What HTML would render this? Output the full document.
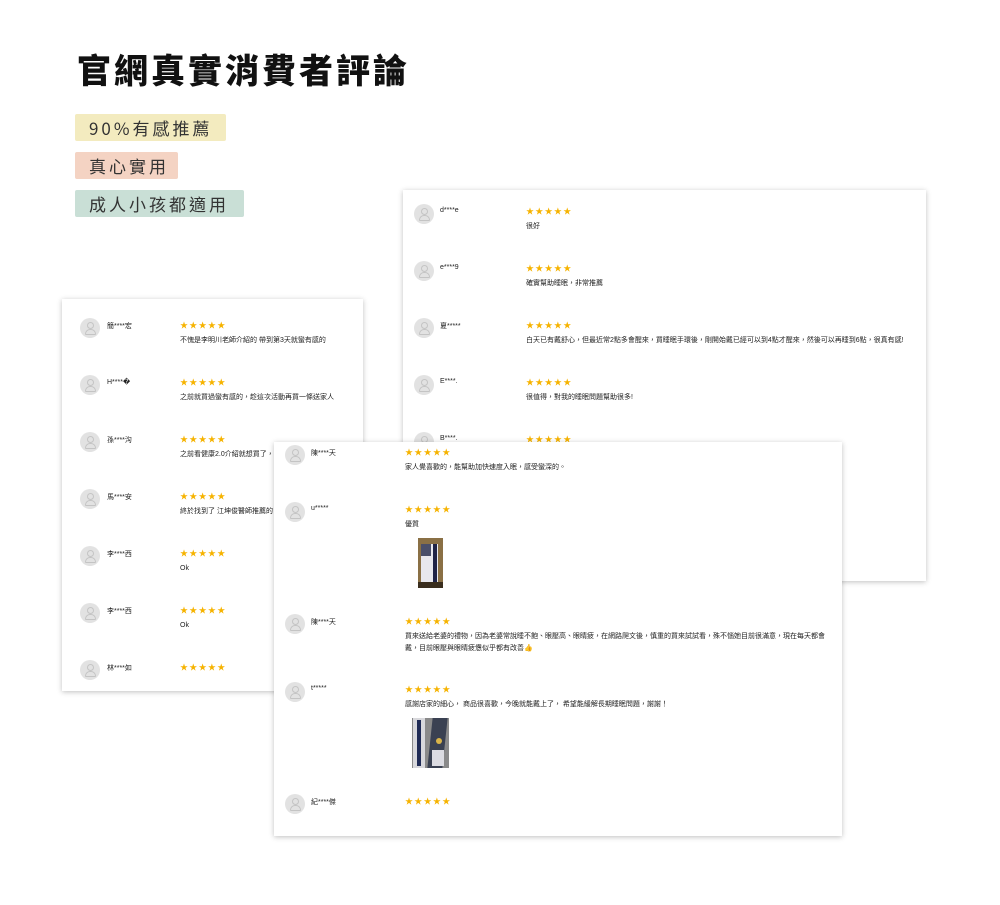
<!DOCTYPE html>
<html><head><meta charset="utf-8">
<style>
*{margin:0;padding:0;box-sizing:border-box}
body{width:1000px;height:905px;background:#fff;position:relative;overflow:hidden;font-family:"Liberation Sans","Noto Sans CJK TC",sans-serif;color:#333}
h1{position:absolute;left:77px;top:44px;font-size:34px;font-weight:900;letter-spacing:3px;color:#111;font-family:"Noto Sans CJK TC",sans-serif}
.tag{position:absolute;left:75px;height:27px;line-height:27px;font-size:17px;letter-spacing:3px;padding-left:14px;color:#333;border-radius:2px;font-family:"Noto Sans CJK TC",sans-serif}
.card{position:absolute;background:#fff;box-shadow:0 1px 5px rgba(0,0,0,.25);overflow:hidden}
.r{position:absolute;left:0;right:0;height:14px}
.av{position:absolute;width:20px;height:20px;border-radius:50%;background:#e2e2e2;top:-4px}
.av:before{content:"";position:absolute;left:7px;top:4px;width:5px;height:5px;border:1px solid #c4c4c4;border-radius:50%}
.av:after{content:"";position:absolute;left:5px;top:11px;width:9px;height:4px;border:1px solid #c4c4c4;border-radius:5px 5px 1px 1px}
.nm{position:absolute;top:-1px;font-size:7px;color:#222;white-space:nowrap}
.st{position:absolute;top:0;font-size:8px;color:#f6b300;letter-spacing:1.3px;white-space:nowrap;line-height:8px}
.tx{position:absolute;top:13px;font-size:7px;color:#222;white-space:nowrap;line-height:12px}
.img{position:absolute;overflow:hidden}
</style></head><body>
<h1>官網真實消費者評論</h1>
<div class="tag" style="top:114px;width:151px;background:#f3ebbf">90%有感推薦</div>
<div class="tag" style="top:152px;width:103px;background:#f4d3c3">真心實用</div>
<div class="tag" style="top:190px;width:169px;background:#c9dfd6">成人小孩都適用</div>

<div class="card" style="left:62px;top:299px;width:301px;height:392px">
<div class="r" style="top:23px"><div class="av" style="left:18px"></div><div class="nm" style="left:45px">簡****宏</div><div class="st" style="left:118px">★★★★★</div><div class="tx" style="left:118px">不愧是李明川老師介紹的 帶到第3天就蠻有感的</div></div>
<div class="r" style="top:80px"><div class="av" style="left:18px"></div><div class="nm" style="left:45px">H****�</div><div class="st" style="left:118px">★★★★★</div><div class="tx" style="left:118px">之前就買過蠻有感的，趁這次活動再買一條送家人</div></div>
<div class="r" style="top:137px"><div class="av" style="left:18px"></div><div class="nm" style="left:45px">孫****沟</div><div class="st" style="left:118px">★★★★★</div><div class="tx" style="left:118px">之前看健康2.0介紹就想買了，</div></div>
<div class="r" style="top:194px"><div class="av" style="left:18px"></div><div class="nm" style="left:45px">馬****安</div><div class="st" style="left:118px">★★★★★</div><div class="tx" style="left:118px">終於找到了 江坤俊醫師推薦的</div></div>
<div class="r" style="top:251px"><div class="av" style="left:18px"></div><div class="nm" style="left:45px">李****西</div><div class="st" style="left:118px">★★★★★</div><div class="tx" style="left:118px">Ok</div></div>
<div class="r" style="top:308px"><div class="av" style="left:18px"></div><div class="nm" style="left:45px">李****西</div><div class="st" style="left:118px">★★★★★</div><div class="tx" style="left:118px">Ok</div></div>
<div class="r" style="top:365px"><div class="av" style="left:18px"></div><div class="nm" style="left:45px">林****如</div><div class="st" style="left:118px">★★★★★</div></div>
</div>

<div class="card" style="left:403px;top:190px;width:523px;height:391px">
<div class="r" style="top:18px"><div class="av" style="left:11px"></div><div class="nm" style="left:37px">d****e</div><div class="st" style="left:123px">★★★★★</div><div class="tx" style="left:123px">很好</div></div>
<div class="r" style="top:75px"><div class="av" style="left:11px"></div><div class="nm" style="left:37px">e****9</div><div class="st" style="left:123px">★★★★★</div><div class="tx" style="left:123px">確實幫助睡眠，非常推薦</div></div>
<div class="r" style="top:132px"><div class="av" style="left:11px"></div><div class="nm" style="left:37px">夏*****</div><div class="st" style="left:123px">★★★★★</div><div class="tx" style="left:123px">白天已有戴舒心，但最近常2點多會醒來，買睡眠手環後，剛開始戴已經可以到4點才醒來，然後可以再睡到6點，很真有感!</div></div>
<div class="r" style="top:189px"><div class="av" style="left:11px"></div><div class="nm" style="left:37px">E****.</div><div class="st" style="left:123px">★★★★★</div><div class="tx" style="left:123px">很值得，對我的睡眠問題幫助很多!</div></div>
<div class="r" style="top:246px"><div class="av" style="left:11px"></div><div class="nm" style="left:37px">B****.</div><div class="st" style="left:123px">★★★★★</div></div>
</div>

<div class="card" style="left:274px;top:442px;width:568px;height:394px">
<div class="r" style="top:7px"><div class="av" style="left:11px"></div><div class="nm" style="left:37px">陳****天</div><div class="st" style="left:131px">★★★★★</div><div class="tx" style="left:131px">家人覺喜歡的，能幫助加快速度入眠，感受蠻深的。</div></div>
<div class="r" style="top:64px"><div class="av" style="left:11px"></div><div class="nm" style="left:37px">u*****</div><div class="st" style="left:131px">★★★★★</div><div class="tx" style="left:131px">優質</div></div>
<div class="img" style="left:144px;top:96px;width:25px;height:50px;background:#8a7045">
  <div style="position:absolute;left:3px;top:6px;width:17px;height:40px;background:#e8e8ee"></div>
  <div style="position:absolute;left:3px;top:6px;width:10px;height:12px;background:#4a4f6a"></div>
  <div style="position:absolute;left:15px;top:6px;width:4px;height:40px;background:#1f2346"></div>
  <div style="position:absolute;left:0;top:44px;width:25px;height:6px;background:#3a2e1e"></div>
</div>
<div class="r" style="top:176px"><div class="av" style="left:11px"></div><div class="nm" style="left:37px">陳****天</div><div class="st" style="left:131px">★★★★★</div><div class="tx" style="left:131px">買來送給老婆的禮物，因為老婆常說睡不飽、眼壓高、眼睛疲，在網路爬文後，慎重的買來試試看，殊不惱她目前很滿意，現在每天都會<br>戴，目前眼壓與眼睛疲憊似乎都有改善👍</div></div>
<div class="r" style="top:244px"><div class="av" style="left:11px"></div><div class="nm" style="left:37px">t*****</div><div class="st" style="left:131px">★★★★★</div><div class="tx" style="left:131px">感謝店家的細心， 商品很喜歡，今晚就能戴上了， 希望能緩解長期睡眠問題，謝謝！</div></div>
<div class="img" style="left:138px;top:276px;width:37px;height:50px;background:#8a8a8a">
  <div style="position:absolute;left:1px;top:0;width:12px;height:50px;background:#d8d8dc"></div>
  <div style="position:absolute;left:5px;top:2px;width:4px;height:46px;background:#1e2a55"></div>
  <div style="position:absolute;left:18px;top:0;width:15px;height:50px;background:#3a4152;transform:skewX(-6deg)"></div>
  <div style="position:absolute;left:24px;top:20px;width:6px;height:6px;border-radius:50%;background:#d9b44a"></div>
  <div style="position:absolute;left:20px;top:32px;width:12px;height:16px;background:#dcdce2"></div>
</div>
<div class="r" style="top:356px"><div class="av" style="left:11px"></div><div class="nm" style="left:37px">紀****傑</div><div class="st" style="left:131px">★★★★★</div></div>
</div>
</body></html>
